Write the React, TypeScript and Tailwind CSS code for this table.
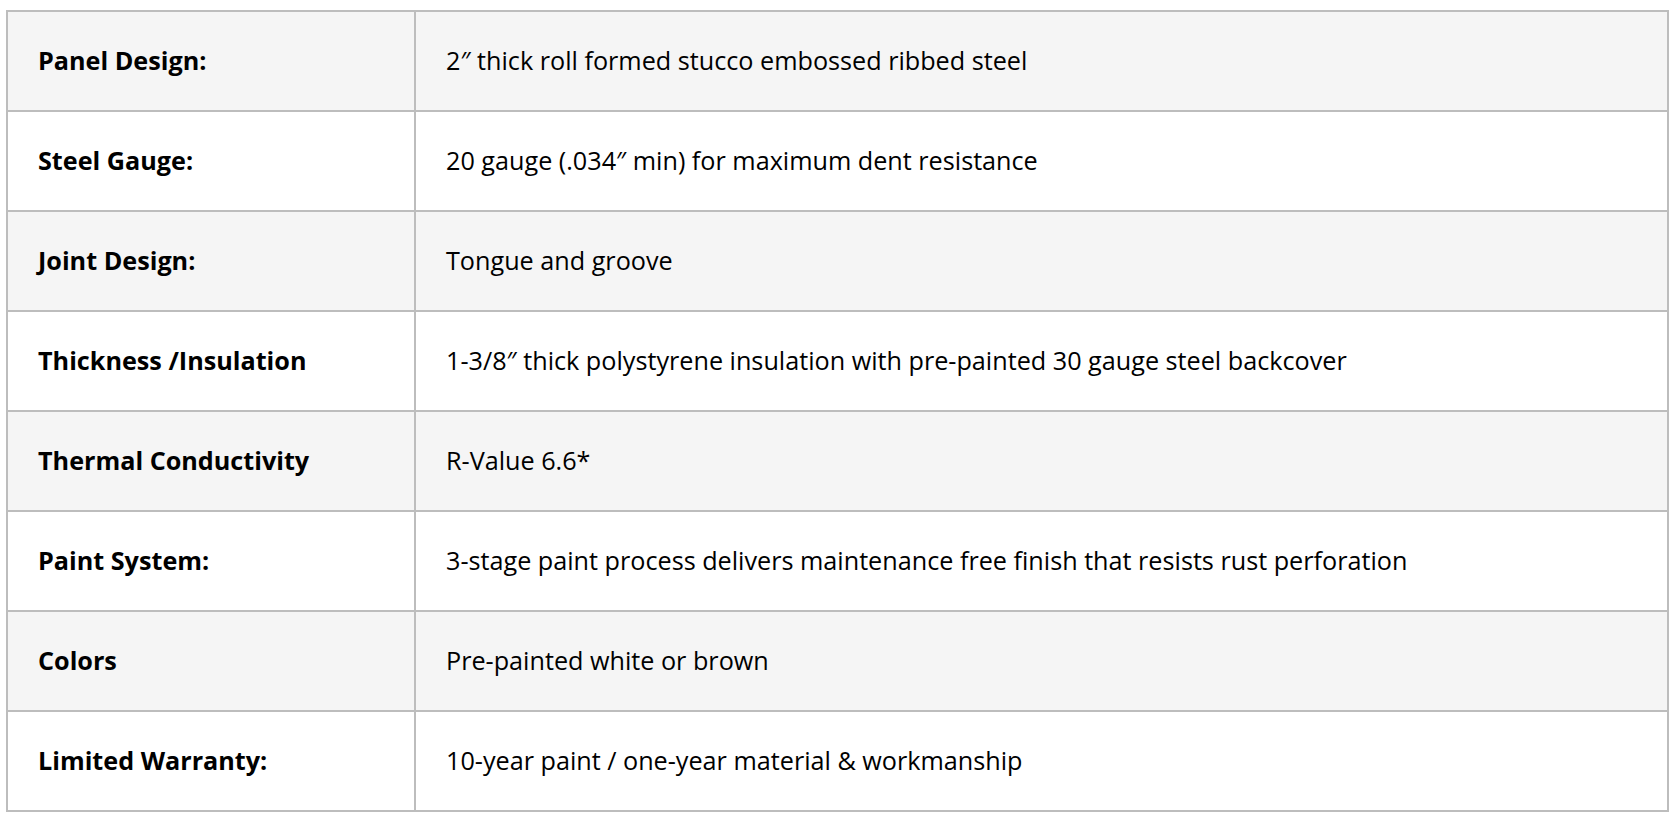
const specs = [
  { label: 'Panel Design:', value: '2″ thick roll formed stucco embossed ribbed steel' },
  { label: 'Steel Gauge:', value: '20 gauge (.034″ min) for maximum dent resistance' },
  { label: 'Joint Design:', value: 'Tongue and groove' },
  { label: 'Thickness /Insulation', value: '1-3/8″ thick polystyrene insulation with pre-painted 30 gauge steel backcover' },
  { label: 'Thermal Conductivity', value: 'R-Value 6.6*' },
  { label: 'Paint System:', value: '3-stage paint process delivers maintenance free finish that resists rust perforation' },
  { label: 'Colors', value: 'Pre-painted white or brown' },
  { label: 'Limited Warranty:', value: '10-year paint / one-year material & workmanship' },
];

export default function App() {
  return (
    <div className="min-h-screen bg-white pl-[6px] pr-[7px] pt-[10px] font-['Open_Sans',sans-serif] text-[25.2px] text-black">
      <table className="w-full border-collapse border-2 border-[#bdbdbd]">
        <tbody>
          {specs.map((row, i) => (
            <tr key={row.label} className={i % 2 === 0 ? 'bg-[#f5f5f5]' : 'bg-white'}>
              <td className="h-[100px] w-[408px] border-2 border-[#bdbdbd] px-[30px] font-bold">
                {row.label}
              </td>
              <td className="h-[100px] border-2 border-[#bdbdbd] px-[30px]">{row.value}</td>
            </tr>
          ))}
        </tbody>
      </table>
    </div>
  );
}
